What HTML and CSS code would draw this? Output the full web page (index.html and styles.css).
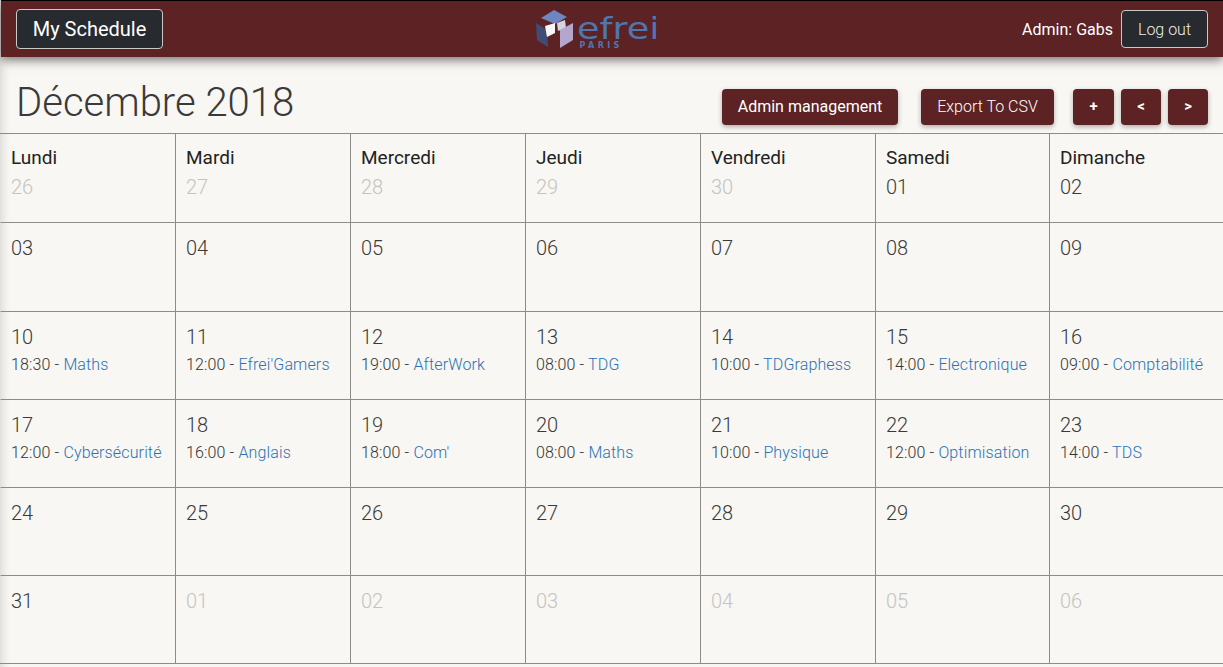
FILE: index.html
```html
<!DOCTYPE html>
<html lang="fr">
<head>
<meta charset="utf-8">
<title>My Schedule</title>
<link rel="stylesheet" href="styles.css">
</head>
<body>
<header class="navbar">
  <a class="btn-dark btn-brand">My Schedule</a>
  <div class="logo">
    <svg class="cube" width="40" height="41" viewBox="0 0 40 41">
      <polygon points="6,9 19,1 32,8 20,15" fill="#6f86c0"/>
      <polygon points="1,14 12,21 13,38 2,31" fill="#414c75"/>
      <polygon points="10,17 20,14 20,24 12,28" fill="#f6f6f6"/>
      <polygon points="22,14 30,11 31,19 23,22" fill="#d5d5de"/>
      <polygon points="25,21 38,14 38,31 25,39" fill="#b5a6cf"/>
    </svg>
    <div class="wordmark">
      <span class="efrei">efrei</span>
      <span class="paris">PARIS</span>
    </div>
  </div>
  <div class="user">
    <span class="user-name">Admin: Gabs</span>
    <a class="btn-dark btn-logout">Log out</a>
  </div>
</header>
<section class="toolbar">
  <h1 class="month">Décembre 2018</h1>
  <div class="actions">
    <a class="btn-red btn-admin">Admin management</a>
    <a class="btn-red btn-export">Export To CSV</a>
    <a class="btn-red btn-small btn-plus">+</a>
    <a class="btn-red btn-small btn-prev">&lt;</a>
    <a class="btn-red btn-small">&gt;</a>
  </div>
</section>
<main class="calendar">
  <div class="cell"><div class="dayname">Lundi</div><div class="num muted">26</div></div>
  <div class="cell"><div class="dayname">Mardi</div><div class="num muted">27</div></div>
  <div class="cell"><div class="dayname">Mercredi</div><div class="num muted">28</div></div>
  <div class="cell"><div class="dayname">Jeudi</div><div class="num muted">29</div></div>
  <div class="cell"><div class="dayname">Vendredi</div><div class="num muted">30</div></div>
  <div class="cell"><div class="dayname">Samedi</div><div class="num">01</div></div>
  <div class="cell"><div class="dayname">Dimanche</div><div class="num">02</div></div>

  <div class="cell"><div class="num first">03</div></div>
  <div class="cell"><div class="num first">04</div></div>
  <div class="cell"><div class="num first">05</div></div>
  <div class="cell"><div class="num first">06</div></div>
  <div class="cell"><div class="num first">07</div></div>
  <div class="cell"><div class="num first">08</div></div>
  <div class="cell"><div class="num first">09</div></div>

  <div class="cell"><div class="num first">10</div><div class="event">18:30 - <a>Maths</a></div></div>
  <div class="cell"><div class="num first">11</div><div class="event">12:00 - <a>Efrei'Gamers</a></div></div>
  <div class="cell"><div class="num first">12</div><div class="event">19:00 - <a>AfterWork</a></div></div>
  <div class="cell"><div class="num first">13</div><div class="event">08:00 - <a>TDG</a></div></div>
  <div class="cell"><div class="num first">14</div><div class="event">10:00 - <a>TDGraphess</a></div></div>
  <div class="cell"><div class="num first">15</div><div class="event">14:00 - <a>Electronique</a></div></div>
  <div class="cell"><div class="num first">16</div><div class="event">09:00 - <a>Comptabilité</a></div></div>

  <div class="cell"><div class="num first">17</div><div class="event">12:00 - <a>Cybersécurité</a></div></div>
  <div class="cell"><div class="num first">18</div><div class="event">16:00 - <a>Anglais</a></div></div>
  <div class="cell"><div class="num first">19</div><div class="event">18:00 - <a>Com'</a></div></div>
  <div class="cell"><div class="num first">20</div><div class="event">08:00 - <a>Maths</a></div></div>
  <div class="cell"><div class="num first">21</div><div class="event">10:00 - <a>Physique</a></div></div>
  <div class="cell"><div class="num first">22</div><div class="event">12:00 - <a>Optimisation</a></div></div>
  <div class="cell"><div class="num first">23</div><div class="event">14:00 - <a>TDS</a></div></div>

  <div class="cell"><div class="num first">24</div></div>
  <div class="cell"><div class="num first">25</div></div>
  <div class="cell"><div class="num first">26</div></div>
  <div class="cell"><div class="num first">27</div></div>
  <div class="cell"><div class="num first">28</div></div>
  <div class="cell"><div class="num first">29</div></div>
  <div class="cell"><div class="num first">30</div></div>

  <div class="cell"><div class="num first">31</div></div>
  <div class="cell"><div class="num first muted">01</div></div>
  <div class="cell"><div class="num first muted">02</div></div>
  <div class="cell"><div class="num first muted">03</div></div>
  <div class="cell"><div class="num first muted">04</div></div>
  <div class="cell"><div class="num first muted">05</div></div>
  <div class="cell"><div class="num first muted">06</div></div>
</main>
</body>
</html>
```
FILE: styles.css
```css
* { box-sizing: border-box; }
html, body { margin: 0; height: 100%; overflow: hidden; }
body {
  background: #f8f7f3;
  font-family: Roboto, "Liberation Sans", sans-serif;
  font-weight: 300;
  color: #333;
  box-shadow: inset 10px 0 10px -8px rgba(0,0,0,.14);
}
.navbar {
  height: 57px;
  margin-left: 1px;
  background: #5c2224;
  border-top: 1px solid #000;
  display: flex;
  justify-content: space-between;
  align-items: center;
  padding: 0 15px;
  box-shadow: 0 3px 10px rgba(0,0,0,.55);
  position: relative;
}
.btn-dark {
  background: #272a2e;
  border: 1px solid #c9c9c5;
  border-radius: 4px;
  color: #fff;
  display: inline-flex;
  align-items: center;
  justify-content: center;
}
.btn-brand {
  width: 147px;
  height: 40px;
  font-size: 20px;
  font-weight: 400;
}
.logo {
  display: flex;
  align-items: flex-start;
  width: 123px;
  height: 41px;
  margin-left: 7px;
}
.cube { flex: none; }
.wordmark {
  display: flex;
  flex-direction: column;
  align-items: flex-start;
  margin-left: 2px;
  margin-top: 8px;
}
.efrei {
  display: block;
  width: 65px;
  font-family: "DejaVu Sans", sans-serif;
  font-size: 30px;
  line-height: 24px;
  font-weight: 400;
  color: #4f76ae;
  transform: scaleX(1.22);
  transform-origin: left center;
}
.paris {
  font-family: "DejaVu Sans", sans-serif;
  font-size: 8px;
  line-height: 8px;
  font-weight: 700;
  letter-spacing: 3.4px;
  color: #4f76ae;
  margin: 1px 0 0 3px;
}
.user {
  display: flex;
  align-items: center;
  gap: 8px;
}
.user-name { color: #fff; font-size: 16px; font-weight: 400; }
.btn-logout {
  width: 87px;
  height: 38px;
  font-size: 16px;
  font-weight: 300;
  color: #eee;
}
.toolbar {
  height: 76px;
  display: flex;
  align-items: flex-start;
  justify-content: space-between;
  padding: 0 15px 0 16px;
}
.month {
  margin: 18px 0 0;
  font-size: 40px;
  line-height: 56px;
  font-weight: 300;
  color: #3a3a3a;
}
.actions { display: flex; margin-top: 32px; }
.btn-red {
  height: 36px;
  background: #5c2224;
  color: #fff;
  border-radius: 4px;
  font-size: 16px;
  font-weight: 400;
  display: inline-flex;
  align-items: center;
  justify-content: center;
  padding-bottom: 2px;
  box-shadow: 0 2px 5px rgba(0,0,0,.3);
}
.btn-admin { width: 176px; margin-right: 23px; }
.btn-export { width: 133px; margin-right: 19px; font-weight: 300; }
.btn-small { width: 40px; font-weight: 700; font-size: 15px; }
.btn-plus { width: 41px; margin-right: 7px; }
.btn-prev { margin-right: 7px; }
.calendar {
  display: grid;
  grid-template-columns: repeat(5, 175px) 174px 174px;
  grid-template-rows: 89px 89px 88px 88px 88px 87px;
  border-top: 1px solid #8d8d87;
  border-bottom: 1px solid #8d8d87;
}
.cell {
  border-left: 1px solid #8d8d87;
  border-bottom: 1px solid #8d8d87;
  padding: 0 10px;
  min-width: 0;
}
.cell:nth-child(7n+1) { border-left-color: transparent; }
.cell:nth-last-child(-n+7) { border-bottom: 0; }
.dayname {
  font-size: 19px;
  font-weight: 400;
  line-height: 24px;
  margin-top: 12px;
  color: #222;
}
.num {
  font-size: 20px;
  line-height: 28px;
  font-weight: 300;
  color: #3a3a3a;
  margin-top: 3px;
}
.first { margin-top: 11px; }
.muted { color: #c4c4c0; }
.event {
  font-size: 16px;
  line-height: 24px;
  margin-top: 2px;
  white-space: nowrap;
  letter-spacing: .14px;
  color: #333;
}
.event a { color: #2a72b8; }
```
